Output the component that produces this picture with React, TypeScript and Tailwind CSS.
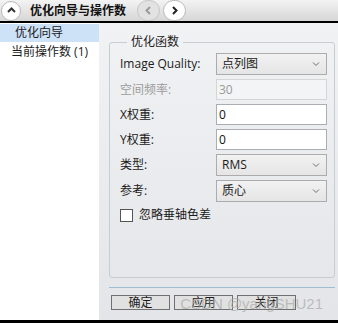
const cjk = { fontFamily: '"Segoe UI", "Open Sans", "Noto Sans CJK SC", sans-serif' };

function Chevron({ dir, color }: { dir: 'up' | 'left' | 'right'; color: string }) {
  const d =
    dir === 'up' ? 'M3 8 L6.5 4.5 L10 8' : dir === 'left' ? 'M8 3 L4.5 6.5 L8 10' : 'M5 3 L8.5 6.5 L5 10';
  return (
    <svg width="13" height="13" viewBox="0 0 13 13">
      <path d={d} fill="none" stroke={color} strokeWidth="2" />
    </svg>
  );
}

function Combo({ value }: { value: string }) {
  return (
    <div className="flex h-[22px] w-[111px] items-center justify-between border border-[#acacac] bg-gradient-to-b from-[#f2f2f2] to-[#e5e5e5] pl-[5px] pr-[6px] text-[12px] text-[#1b1b1b]">
      <span>{value}</span>
      <svg width="8" height="6" viewBox="0 0 8 6">
        <path d="M1 1.5 L4 4.5 L7 1.5" fill="none" stroke="#707070" strokeWidth="1" />
      </svg>
    </div>
  );
}

function TextBox({ value, disabled }: { value: string; disabled?: boolean }) {
  return (
    <div
      className={
        disabled
          ? 'flex h-[21px] w-[111px] items-center border border-[#d5d5d5] bg-[#f3f4f5] pl-[2px] text-[12px] text-[#9a9a9a]'
          : 'flex h-[21px] w-[111px] items-center border border-[#abadb3] bg-white pl-[2px] text-[12px] text-[#111]'
      }
    >
      {value}
    </div>
  );
}

function Row({ label, children, muted }: { label: string; children: React.ReactNode; muted?: boolean }) {
  return (
    <div className="flex items-center">
      <div className={muted ? 'w-[96px] text-[12px] text-[#9c9c9c]' : 'w-[96px] text-[12px] text-[#1b1b1b]'}>{label}</div>
      {children}
    </div>
  );
}

export default function App() {
  return (
    <div className="flex h-[323px] w-[338px] flex-col overflow-hidden bg-white" style={cjk}>
      {/* title bar */}
      <div className="flex h-[21px] items-center bg-gradient-to-b from-[#f3f3f3] to-[#d6d6d6]">
        <div className="ml-[1px] flex h-[20px] w-[20px] items-center justify-center rounded-full border border-[#b9b9b9] bg-white">
          <Chevron dir="up" color="#333" />
        </div>
        <div className="ml-[9px] text-[12px] font-bold text-[#111]">优化向导与操作数</div>
        <div className="ml-[11px] flex h-[21px] w-[23px] items-center justify-center rounded-full border border-[#c4c4c4] bg-[#e2e2e2]">
          <Chevron dir="left" color="#9a9a9a" />
        </div>
        <div className="ml-[3px] flex h-[21px] w-[23px] items-center justify-center rounded-full border border-[#b9b9b9] bg-white">
          <Chevron dir="right" color="#222" />
        </div>
      </div>
      <div className="h-[2px] bg-black" />

      <div className="flex flex-1">
        {/* left tree */}
        <div className="w-[101px] bg-white pt-[1px] text-[12px] text-[#1b1b1b]">
          <div className="flex h-[18px] items-center bg-[#cde1f7] pl-[15px]">优化向导</div>
          <div className="flex h-[20px] items-center pl-[11px]">当前操作数 (1)</div>
        </div>

        {/* right panel */}
        <div className="relative flex flex-1 flex-col bg-gradient-to-b from-[#f1f2f4] to-[#e3e5e8] pl-[10px] pr-[3px]">
          <fieldset className="mt-[10px] h-[245px] rounded-[3px] border border-[#c9ccd0] pl-[10px] pr-[7px]">
            <legend className="ml-[7px] px-[4px] text-[12px] text-[#1b1b1b]">优化函数</legend>
            <div className="mt-[2px] flex flex-col gap-[4px]">
              <Row label="Image Quality:">
                <Combo value="点列图" />
              </Row>
              <Row label="空间频率:" muted>
                <TextBox value="30" disabled />
              </Row>
              <Row label="X权重:">
                <TextBox value="0" />
              </Row>
              <Row label="Y权重:">
                <TextBox value="0" />
              </Row>
              <Row label="类型:">
                <Combo value="RMS" />
              </Row>
              <Row label="参考:">
                <Combo value="质心" />
              </Row>
              <div className="flex items-center">
                <div className="h-[13px] w-[13px] border border-[#555] bg-white" />
                <span className="ml-[6px] text-[12px] text-[#1b1b1b]">忽略垂轴色差</span>
              </div>
            </div>
          </fieldset>
          <div className="mt-[9px] h-[1px] bg-[#9dbdd4]" />
          <div className="mt-[7px] flex gap-[4px] pl-[2px]">
            {['确定', '应用', '关闭'].map((t) => (
              <div
                key={t}
                className="flex h-[15px] w-[59px] items-center justify-center border border-[#707070] bg-[#e1e1e1] text-[12px] text-[#1b1b1b]"
              >
                {t}
              </div>
            ))}
          </div>
          <div
            className="absolute bottom-[5px] right-[15px] text-[15px] text-[#a9a9a9]/70"
            style={{ fontFamily: '"Liberation Sans", Arial, sans-serif' }}
          >
            CSDN @yangSHU21
          </div>
        </div>
      </div>
      <div className="h-[3px] bg-black" />
    </div>
  );
}
